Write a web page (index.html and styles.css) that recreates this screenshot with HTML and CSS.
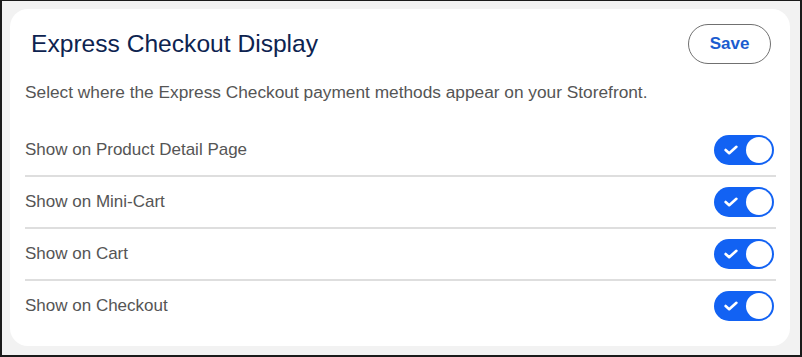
FILE: index.html
```html
<!DOCTYPE html>
<html>
<head>
<meta charset="utf-8">
<link rel="stylesheet" href="styles.css">
</head>
<body>
<div class="frame">
  <section class="card">
    <header class="card-head">
      <h1 class="title">Express Checkout Display</h1>
      <button class="save-btn">Save</button>
    </header>
    <p class="desc">Select where the Express Checkout payment methods appear on your Storefront.</p>
    <ul class="rows">
      <li class="row"><span class="label">Show on Product Detail Page</span>
        <span class="toggle"><svg class="check" viewBox="0 0 14 10" width="14" height="10"><path d="M1.6 5 L5.2 8.2 L12.4 1.8" fill="none" stroke="#fff" stroke-width="2.6" stroke-linecap="round" stroke-linejoin="round"/></svg><span class="knob"></span></span></li>
      <li class="row"><span class="label">Show on Mini-Cart</span>
        <span class="toggle"><svg class="check" viewBox="0 0 14 10" width="14" height="10"><path d="M1.6 5 L5.2 8.2 L12.4 1.8" fill="none" stroke="#fff" stroke-width="2.6" stroke-linecap="round" stroke-linejoin="round"/></svg><span class="knob"></span></span></li>
      <li class="row"><span class="label">Show on Cart</span>
        <span class="toggle"><svg class="check" viewBox="0 0 14 10" width="14" height="10"><path d="M1.6 5 L5.2 8.2 L12.4 1.8" fill="none" stroke="#fff" stroke-width="2.6" stroke-linecap="round" stroke-linejoin="round"/></svg><span class="knob"></span></span></li>
      <li class="row"><span class="label">Show on Checkout</span>
        <span class="toggle"><svg class="check" viewBox="0 0 14 10" width="14" height="10"><path d="M1.6 5 L5.2 8.2 L12.4 1.8" fill="none" stroke="#fff" stroke-width="2.6" stroke-linecap="round" stroke-linejoin="round"/></svg><span class="knob"></span></span></li>
    </ul>
  </section>
</div>
</body>
</html>
```
FILE: styles.css
```css
* { box-sizing: border-box; }
html, body { margin: 0; padding: 0; background: #f2f2f2; }
body { font-family: "Liberation Sans", Arial, Helvetica, sans-serif; }
.frame {
  width: 802px;
  height: 357px;
  border-style: solid;
  border-color: #1a1a1a;
  border-width: 1px 2px 2px 2px;
  background: #f2f2f2;
  padding: 8px 10px 9px 8px;
}
.card {
  background: #fff;
  border-radius: 18px;
  height: 337px;
  padding: 15px 14px 0 15px;
}
.card-head {
  display: flex;
  align-items: center;
  justify-content: space-between;
  height: 40px;
}
.title {
  margin: 0 0 0 6px;
  font-size: 24.6px;
  font-weight: 400;
  color: #0d2350;
}
.save-btn {
  width: 83px;
  height: 40px;
  margin-right: 5px;
  border: 1px solid #707070;
  border-radius: 20px;
  background: #fff;
  color: #1b5ccf;
  font-family: inherit;
  font-size: 17px;
  font-weight: 700;
  padding: 0;
}
.desc {
  margin: 18px 0 0 0;
  line-height: 20px;
  font-size: 17.3px;
  color: #555;
}
.rows {
  list-style: none;
  margin: 23px 0 0 0;
  padding: 0;
}
.row {
  display: flex;
  align-items: center;
  justify-content: space-between;
  height: 52px;
  border-bottom: 2px solid #dedede;
}
.row:last-child { border-bottom: none; height: 50px; }
.label {
  font-size: 17px;
  color: #555;
}
.toggle {
  display: flex;
  align-items: center;
  justify-content: space-between;
  width: 60px;
  height: 30px;
  margin-right: 2px;
  border-radius: 15px;
  background: #1262f3;
  padding: 0 2px 0 10px;
}
.check { display: block; }
.knob {
  width: 26px;
  height: 26px;
  border-radius: 50%;
  background: #fff;
}
```
